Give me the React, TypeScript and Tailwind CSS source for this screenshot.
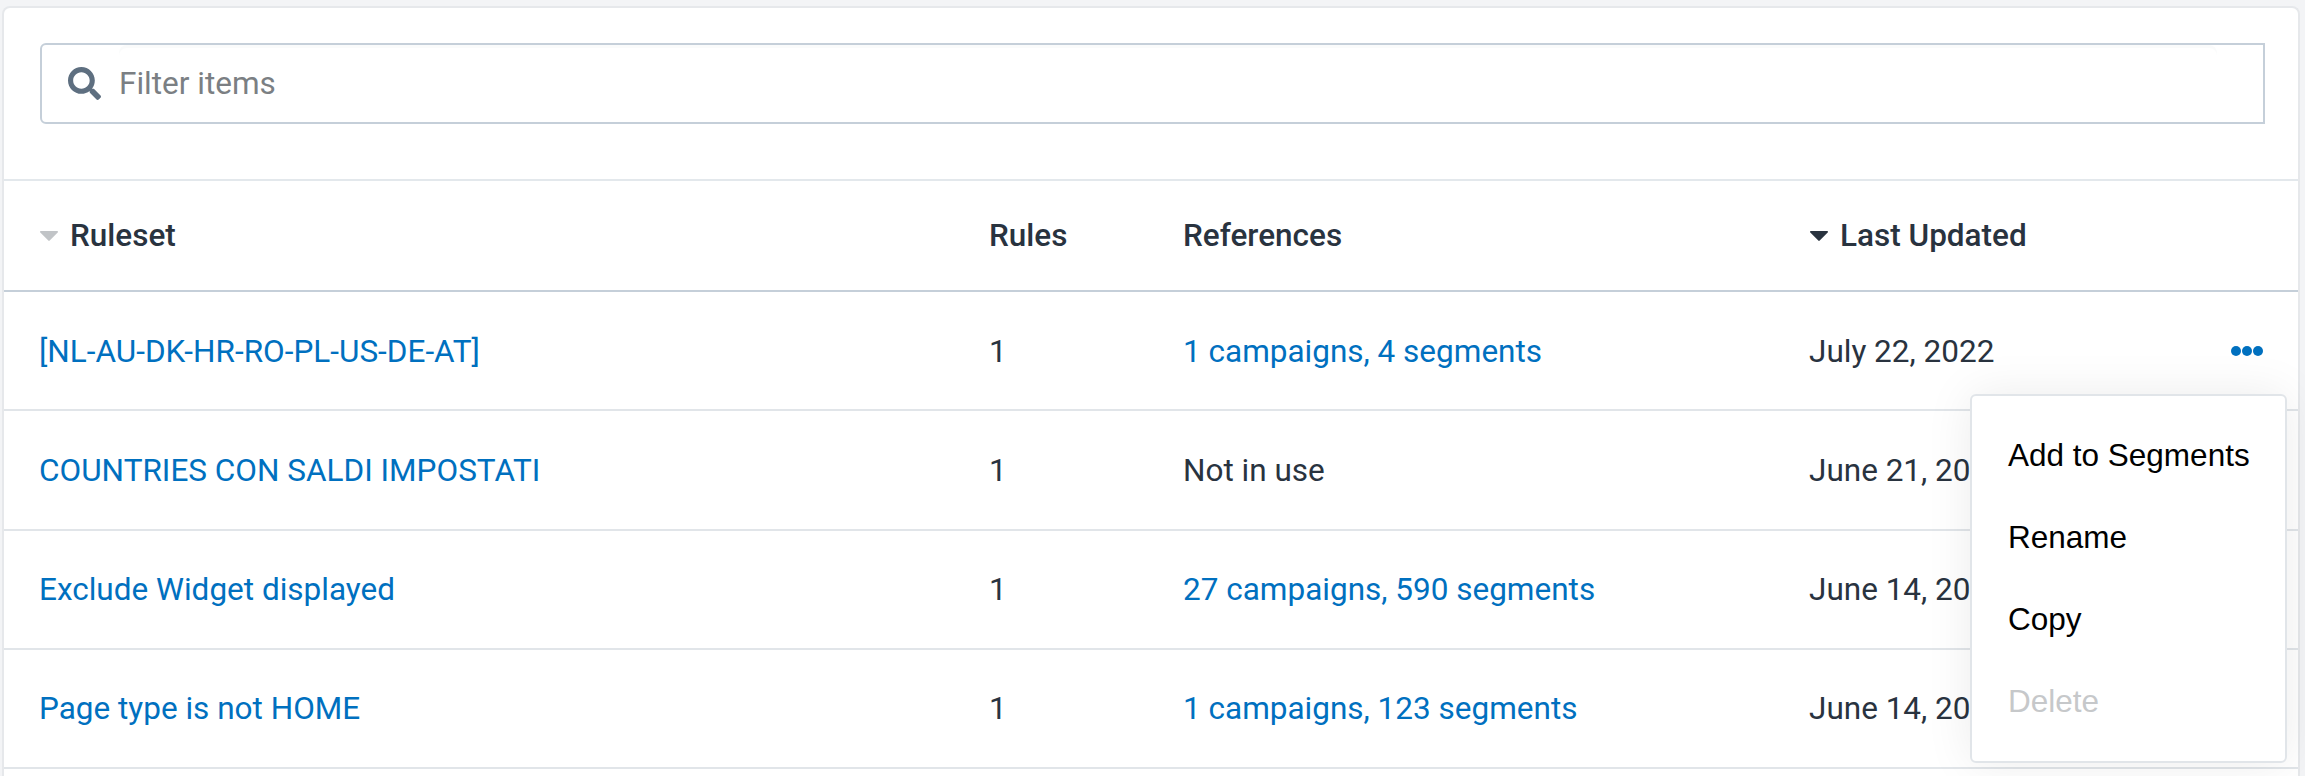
import React from "react";
import { FaSearch } from "react-icons/fa";

const rows = [
  { name: "[NL-AU-DK-HR-RO-PL-US-DE-AT]", refs: "1 campaigns, 4 segments", link: true, date: "July 22, 2022", c: "h-[119px] pt-[2px]" },
  { name: "COUNTRIES CON SALDI IMPOSTATI", refs: "Not in use", link: false, date: "June 21, 2022", c: "h-[120px] pt-[1px]" },
  { name: "Exclude Widget displayed", refs: "27 campaigns, 590 segments", link: true, date: "June 14, 2022", c: "h-[119px]" },
  { name: "Page type is not HOME", refs: "1 campaigns, 123 segments", link: true, date: "June 14, 2022", c: "h-[119px]" },
];

function Caret({ className }: { className: string }) {
  return (
    <svg viewBox="0 0 18 10" className={`h-[10px] w-[18px] shrink-0 ${className}`} fill="currentColor">
      <path d="M1 0h16c.9 0 1.3 1 .7 1.6L9.7 9.6c-.4.4-1 .4-1.4 0L.3 1.6C-.3 1 .1 0 1 0z" />
    </svg>
  );
}

export default function App() {
  return (
    <div className="h-[776px] w-[2305px] overflow-hidden bg-[#f3f4f6] pl-[2px] pr-[5px] pt-[6px] font-['Roboto',sans-serif] text-[31.5px] text-[#29333f]">
      <div className="relative h-[790px] rounded-t-[8px] border-x-2 border-t-2 border-[#e6e8eb] bg-white">
        <div className="h-[171px] px-[36px] pt-[35px]">
          <div className="flex h-[81px] w-[2225px] items-center overflow-hidden rounded-l-[6px] border-2 border-[#c5cfd9] bg-white pl-[26px]">
            <FaSearch className="h-[33px] w-[33px] shrink-0 text-[#5e6f80]" />
            <div className="ml-[18px] mr-[46px] flex flex-1 items-center self-stretch rounded-t-[8px] text-[#7b7f83] shadow-[inset_0_3px_0_#fafbfb]">
              Filter items
            </div>
          </div>
        </div>
        <div className="grid h-[113px] grid-cols-[950px_194px_626px_1fr] items-center border-y-2 border-t-[#e3e8ec] border-b-[#c5cfd9] pl-[36px] font-medium">
          <div className="flex items-center gap-[13px]">
            <Caret className="text-[#c1c4c7]" />
            <span className="-ml-[1px]">Ruleset</span>
          </div>
          <div className="-ml-[1px]">Rules</div>
          <div className="-ml-[1px]">References</div>
          <div className="flex items-center gap-[13px]">
            <Caret className="text-[#29333f]" />
            <span className="-ml-[1px]">Last Updated</span>
          </div>
        </div>
        {rows.map((r, i) => (
          <div
            key={r.name}
            className={`relative grid ${r.c} grid-cols-[950px_194px_626px_1fr] items-center border-b-2 border-[#e1e5e9] pl-[35px]`}
          >
            <div className="text-[#0070bf]">{r.name}</div>
            <div>1</div>
            <div className={r.link ? "text-[#0070bf]" : ""}>{r.refs}</div>
            <div>{r.date}</div>
            {i === 0 && (
              <svg viewBox="0 0 32 10" className="absolute right-[35px] top-[54px] h-[10px] w-[32px] text-[#0070bf]" fill="currentColor">
                <circle cx="5" cy="5" r="5" />
                <circle cx="16" cy="5" r="5" />
                <circle cx="27" cy="5" r="5" />
              </svg>
            )}
          </div>
        ))}
        <div className="absolute left-[1966px] top-[386px] flex h-[369px] w-[317px] flex-col justify-center rounded-[6px] border-2 border-[#e1e5e9] bg-white pl-[36px] font-['Liberation_Sans',sans-serif] text-[#000] shadow-[0_0_48px_rgba(0,0,0,0.08)]">
          <div className="flex h-[82px] items-center">Add to Segments</div>
          <div className="flex h-[82px] items-center">Rename</div>
          <div className="flex h-[82px] items-center">Copy</div>
          <div className="flex h-[82px] items-center text-[#c6c8ca]">Delete</div>
        </div>
      </div>
    </div>
  );
}
